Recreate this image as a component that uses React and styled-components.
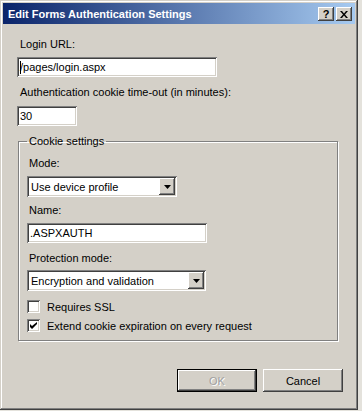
import React from "react";
import styled, { createGlobalStyle, css } from "styled-components";

const Global = createGlobalStyle`
  html, body { margin: 0; padding: 0; background: #e4e2dc; }
  body { font-family: "Liberation Sans", Arial, sans-serif; font-size: 11px; color: #000; }
  * { box-sizing: border-box; }
`;

const raised = css`
  box-shadow: inset -1px -1px #404040, inset 1px 1px #ffffff, inset -2px -2px #808080, inset 2px 2px #d4d0c8;
`;
const sunken = css`
  box-shadow: inset 1px 1px #808080, inset -1px -1px #ffffff, inset 2px 2px #404040, inset -2px -2px #d4d0c8;
`;

const Window = styled.div`
  width: 358px;
  height: 410px;
  background: #d4d0c8;
  padding: 3px;
  display: flex;
  flex-direction: column;
  box-shadow: inset -1px -1px #404040, inset 1px 1px #d4d0c8, inset -2px -2px #808080, inset 2px 2px #ffffff;
`;

const TitleBar = styled.div`
  height: 21px;
  background: linear-gradient(to right, #0a246a, #a6caf0);
  display: flex;
  align-items: center;
  padding: 1px 3px 0 5px;
`;

const Title = styled.div`
  flex: 1;
  color: #fff;
  font-weight: bold;
  font-size: 11px;
  white-space: nowrap;
`;

const CapButton = styled.div`
  width: 16px;
  height: 14px;
  background: #d4d0c8;
  ${raised};
  margin-left: ${(p) => p.$gap || 0}px;
  display: flex;
  align-items: center;
  justify-content: center;
  font-weight: bold;
  font-size: 11px;
  line-height: 1;
`;

const Body = styled.div`
  flex: 1;
  display: flex;
  flex-direction: column;
  padding: 0 0 0 14px;
`;

const Label = styled.div`
  margin-top: ${(p) => p.$mt}px;
  padding-left: ${(p) => p.$pl || 3}px;
  height: 13px;
  line-height: 13px;
  white-space: nowrap;
`;

const TextBox = styled.div`
  margin-top: ${(p) => p.$mt}px;
  width: ${(p) => p.$w}px;
  height: ${(p) => p.$h || 20}px;
  background: #fff;
  ${sunken};
  padding: 0 3px;
  display: flex;
  align-items: center;
  white-space: nowrap;
`;

const Caret = styled.span`
  display: inline-block;
  width: 1px;
  height: 13px;
  background: #000;
  margin-right: -1px;
`;

const Select = styled.div`
  margin-top: ${(p) => p.$mt}px;
  width: ${(p) => p.$w}px;
  height: 21px;
  background: #fff;
  ${sunken};
  padding: 2px 2px 2px 4px;
  display: flex;
  align-items: center;
  white-space: nowrap;
`;

const SelectText = styled.div`
  flex: 1;
`;

const DropButton = styled.div`
  width: 16px;
  height: 17px;
  background: #d4d0c8;
  ${raised};
  display: flex;
  align-items: center;
  justify-content: center;
`;

const Group = styled.fieldset`
  margin: 9px 0 0 1px;
  width: 320px;
  height: 206px;
  padding: 0 0 0 8px;
  border: 1px solid #808080;
  box-shadow: 1px 1px 0 #ffffff, inset 1px 1px 0 #ffffff;
  display: flex;
  flex-direction: column;
  min-width: 0;
`;

const Legend = styled.legend`
  padding: 0 2px;
  margin-left: 0;
  height: 13px;
  line-height: 13px;
`;

const CheckRow = styled.div`
  margin-top: ${(p) => p.$mt}px;
  display: flex;
  align-items: center;
  height: 13px;
  white-space: nowrap;
`;

const CheckBox = styled.div`
  width: 13px;
  height: 13px;
  background: #fff;
  ${sunken};
  margin-right: 7px;
  display: flex;
  align-items: center;
  justify-content: center;
`;

const ButtonRow = styled.div`
  margin-top: 28px;
  display: flex;
  gap: 6px;
  padding-left: 160px;
`;

const Button = styled.div`
  width: 80px;
  height: 23px;
  background: #d4d0c8;
  display: flex;
  align-items: center;
  justify-content: center;
  ${(p) =>
    p.$default
      ? css`
          border: 1px solid #000;
          box-shadow: inset -1px -1px #404040, inset 1px 1px #ffffff, inset -2px -2px #808080;
          color: #a0a0a0;
          text-shadow: 1px 1px 0 #ffffff;
        `
      : css`
          ${raised};
        `}
`;

const Arrow = () => (
  <svg width="7" height="4" viewBox="0 0 7 4">
    <path d="M0 0h7L3.5 4z" fill="#000" />
  </svg>
);

const Close = () => (
  <svg width="8" height="7" viewBox="0 0 8 7">
    <path d="M0 0h2l2 2.5L6 0h2L5 3.5 8 7H6L4 4.5 2 7H0l3-3.5z" fill="#000" />
  </svg>
);

const Check = () => (
  <svg width="7" height="7" viewBox="0 0 7 7">
    <path d="M0 2v3l2 2 5-5V0L2 4z" fill="#000" />
  </svg>
);

export default function App() {
  return (
    <>
      <Global />
      <Window>
        <TitleBar>
          <Title>Edit Forms Authentication Settings</Title>
          <CapButton>?</CapButton>
          <CapButton $gap={2}>
            <Close />
          </CapButton>
        </TitleBar>
        <Body>
          <Label $mt={14}>Login URL:</Label>
          <TextBox $mt={6} $w={200}>
            <Caret />
            /pages/login.aspx
          </TextBox>
          <Label $mt={9}>Authentication cookie time-out (in minutes):</Label>
          <TextBox $mt={7} $w={60}>
            30
          </TextBox>
          <Group>
            <Legend>Cookie settings</Legend>
            <Label $mt={9} $pl={2}>Mode:</Label>
            <Select $mt={6} $w={150}>
              <SelectText>Use device profile</SelectText>
              <DropButton>
                <Arrow />
              </DropButton>
            </Select>
            <Label $mt={7} $pl={2}>Name:</Label>
            <TextBox $mt={6} $w={180}>
              .ASPXAUTH
            </TextBox>
            <Label $mt={9} $pl={2}>Protection mode:</Label>
            <Select $mt={5} $w={179}>
              <SelectText>Encryption and validation</SelectText>
              <DropButton>
                <Arrow />
              </DropButton>
            </Select>
            <CheckRow $mt={9}>
              <CheckBox />
              Requires SSL
            </CheckRow>
            <CheckRow $mt={6}>
              <CheckBox>
                <Check />
              </CheckBox>
              Extend cookie expiration on every request
            </CheckRow>
          </Group>
          <ButtonRow>
            <Button $default>OK</Button>
            <Button>Cancel</Button>
          </ButtonRow>
        </Body>
      </Window>
    </>
  );
}
